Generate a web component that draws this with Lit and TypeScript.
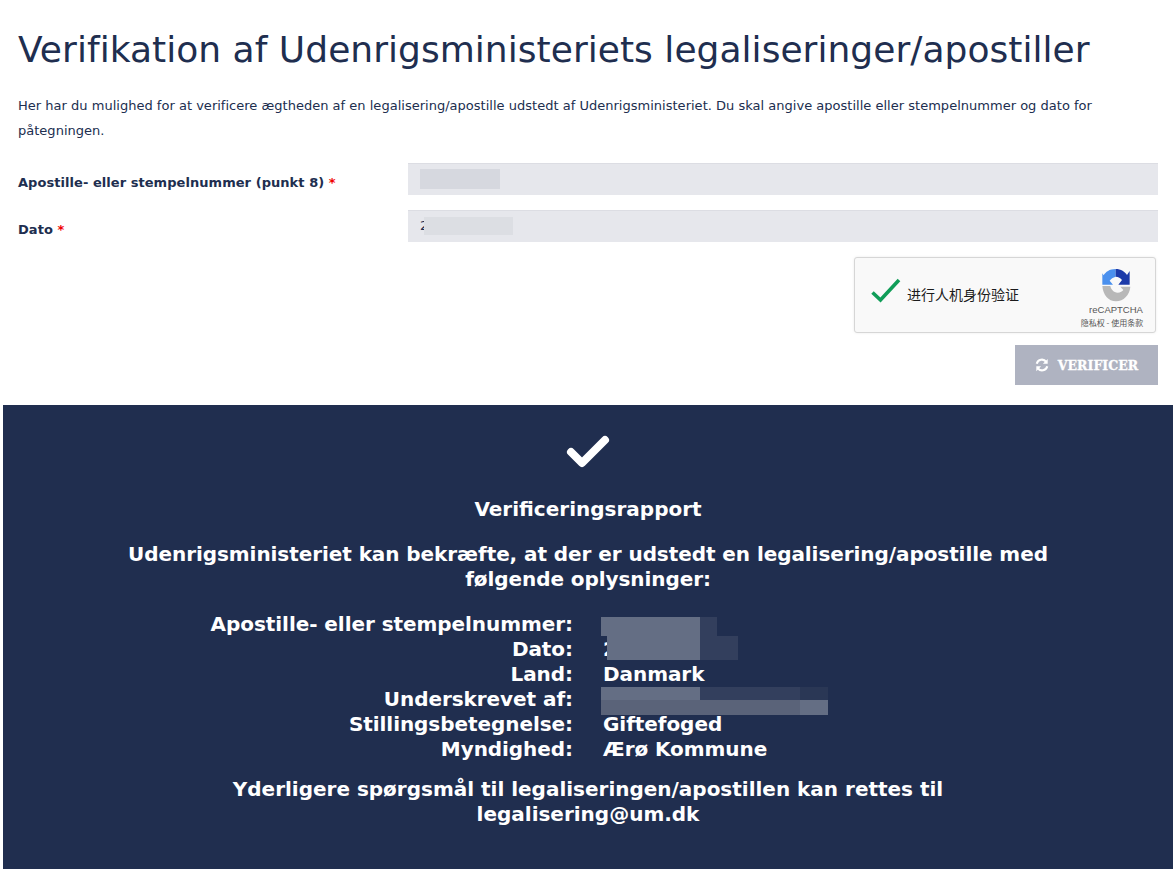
import { LitElement, html, css } from "lit";
import { customElement } from "lit/decorators.js";

@customElement("app-root")
export class AppRoot extends LitElement {
  static styles = css`
    :host { display: block; width: 1176px; height: 869px; overflow: hidden; background: #fff; font-family: "DejaVu Sans", Verdana, sans-serif; color: #202e4f; }
    .top { padding: 0 18px 0 18px; display: flex; flex-direction: column; height: 405px; box-sizing: border-box; }
    h1 { margin: 26px 0 0; font-size: 36px; line-height: 48px; font-weight: 400; letter-spacing: 0.035px; }
    .intro { margin: 19px 0 0; font-size: 13px; line-height: 25px; width: 1110px; letter-spacing: 0.015px; }
    .row { display: grid; grid-template-columns: 390px 750px; align-items: center; height: 32px; }
    .row.first { margin-top: 20px; }
    .row.second { margin-top: 15px; }
    label { font-size: 13px; font-weight: 700; padding-top: 6px; letter-spacing: 0.05px; }
    .req { color: #f00000; }
    .field { position: relative; height: 32px; background: #e6e7ec; border-top: 1px solid #dcdde3; box-sizing: border-box; font-size: 13px; line-height: 30px; padding-left: 12px; }
    .patch { position: absolute; background: #d6d8df; }
    .p1 { left: 12px; top: 5px; width: 80px; height: 20px; }
    .p2 { left: 16px; top: 6px; width: 89px; height: 18px; background: #dcdee3; }
    .captcha-row { display: flex; justify-content: flex-end; margin-top: 15px; padding-right: 2px; }
    .captcha { width: 302px; height: 76px; box-sizing: border-box; background: #f9f9f9; border: 1px solid #d6d6d6; border-radius: 3px; box-shadow: 0 0 3px rgba(0,0,0,.08); display: flex; align-items: center; position: relative; }
    .captcha .check { margin-left: 15px; width: 32px; height: 28px; flex: none; margin-top: -9px; }
    .captcha .txt { margin-left: 5px; margin-top: -3px; font-family: "Noto Sans CJK SC", sans-serif; font-size: 14px; color: #1b1b1b; }
    .brand { position: absolute; right: 5px; top: 8px; width: 68px; display: flex; flex-direction: column; align-items: center; color: #6f6f6f; }
    .brand svg { width: 30px; height: 35px; margin-top: 2px; }
    .brand .n { font-family: "Liberation Sans", sans-serif; font-size: 9.5px; line-height: 11px; margin-top: 1px; color: #555; }
    .brand .s { font-family: "Noto Sans CJK SC", sans-serif; font-size: 8px; line-height: 11px; margin-top: 2px; margin-right: 8px; color: #555; white-space: nowrap; }
    .btn-row { display: flex; justify-content: flex-end; margin-top: 12px; }
    .btn { width: 143px; height: 40px; background: #afb3c1; color: #fff; display: flex; align-items: center; justify-content: center; gap: 9px; font-family: "DejaVu Serif", serif; font-weight: 700; font-size: 12.5px; letter-spacing: 0.05px; -webkit-text-stroke: 0.3px #fff; }
    .btn svg { width: 14px; height: 14px; }
    .report { margin: 0 3px; height: 464px; background: #202e4f; color: #fff; display: flex; flex-direction: column; align-items: center; font-weight: 700; font-size: 20px; line-height: 25px; text-align: center; }
    .report .ok { width: 44px; height: 34px; margin-top: 30px; }
    .report .t { margin-top: 28px; }
    .report .lead { margin-top: 20px; width: 1000px; letter-spacing: -0.07px; }
    .tbl { position: relative; margin-top: 20px; width: 1170px; display: grid; grid-template-columns: 570px 1fr; column-gap: 30px; text-align: left; letter-spacing: -0.06px; }
    .tbl .k { text-align: right; }
    .blur { position: absolute; }
    .b1 { left: 598px; top: 5px; width: 99px; height: 19px; background: #646e84; }
    .b1b { left: 604px; top: 24px; width: 93px; height: 24px; background: #646e84; }
    .b2 { left: 697px; top: 5px; width: 17px; height: 19px; background: #333f5d; }
    .b3 { left: 697px; top: 24px; width: 38px; height: 24px; background: #333f5d; }
    .b4 { left: 598px; top: 75px; width: 99px; height: 13px; background: #646e84; }
    .b5 { left: 697px; top: 75px; width: 100px; height: 13px; background: #333f5d; }
    .b6 { left: 797px; top: 75px; width: 28px; height: 13px; background: #2a3755; }
    .b7 { left: 598px; top: 88px; width: 199px; height: 15px; background: #5a6379; }
    .b8 { left: 797px; top: 88px; width: 28px; height: 15px; background: #646e84; }
    .foot { margin-top: 15px; width: 800px; letter-spacing: -0.01px; }
  `;

  render() {
    const rows = [
      ["Apostille- eller stempelnummer:", ""],
      ["Dato:", "2"],
      ["Land:", "Danmark"],
      ["Underskrevet af:", ""],
      ["Stillingsbetegnelse:", "Giftefoged"],
      ["Myndighed:", "Ærø Kommune"],
    ];
    return html`
      <div class="top">
        <h1>Verifikation af Udenrigsministeriets legaliseringer/apostiller</h1>
        <p class="intro">Her har du mulighed for at verificere ægtheden af en legalisering/apostille udstedt af Udenrigsministeriet. Du skal angive apostille eller stempelnummer og dato for påtegningen.</p>
        <div class="row first">
          <label>Apostille- eller stempelnummer (punkt 8) <span class="req">*</span></label>
          <div class="field"><div class="patch p1"></div></div>
        </div>
        <div class="row second">
          <label>Dato <span class="req">*</span></label>
          <div class="field">2<div class="patch p2"></div></div>
        </div>
        <div class="captcha-row">
          <div class="captcha">
            <svg class="check" viewBox="0 0 32 28"><path d="M2.5 15.5 L10.5 23 L29 3" fill="none" stroke="#109d58" stroke-width="3.6"/></svg>
            <span class="txt">进行人机身份验证</span>
            <div class="brand">
              <svg viewBox="30 24 90 105">
                <path d="M74 27 C55 27 44 36 38 46 L34 40 V74 H66 L56 62 C60 56 66 52 74 50 Z" fill="#4a90ee"/>
                <path d="M74 27 C90 27 102 35 108 45 L116 33 V74 H82 L93 60 C89 54 82 50 74 50 Z" fill="#1c3aa9"/>
                <path d="M34 78 H58 C60 88 68 98 80 98 C88 98 94 94 97 90 L88 80 H118 C116 104 98 124 75 124 C52 124 36 104 34 78 Z" fill="#b8b8b8"/>
              </svg>
              <div class="n">reCAPTCHA</div>
              <div class="s">隐私权 - 使用条款</div>
            </div>
          </div>
        </div>
        <div class="btn-row">
          <div class="btn">
            <svg viewBox="0 0 16 16" fill="none" stroke="#fff" stroke-width="2.4"><path d="M2 6.5 A6 6 0 0 1 12.8 4.5"/><path d="M14 9.5 A6 6 0 0 1 3.2 11.5"/><path d="M14.5 1 V6.5 H9" fill="#fff" stroke="none"/><path d="M1.5 15 V9.5 H7" fill="#fff" stroke="none"/></svg>
            <span>VERIFICER</span>
          </div>
        </div>
      </div>
      <div class="report">
        <svg class="ok" viewBox="0 0 44 34"><path d="M5 17 L16 28 L39 5" fill="none" stroke="#fff" stroke-width="8" stroke-linecap="round" stroke-linejoin="round"/></svg>
        <div class="t">Verificeringsrapport</div>
        <div class="lead">Udenrigsministeriet kan bekræfte, at der er udstedt en legalisering/apostille med følgende oplysninger:</div>
        <div class="tbl">
          ${rows.map(([k, v]) => html`<div class="k">${k}</div><div>${v}</div>`)}
          ${["b1", "b1b", "b2", "b3", "b4", "b5", "b6", "b7", "b8"].map((b) => html`<div class="blur ${b}"></div>`)}
        </div>
        <div class="foot">Yderligere spørgsmål til legaliseringen/apostillen kan rettes til legalisering@um.dk</div>
      </div>
    `;
  }
}
